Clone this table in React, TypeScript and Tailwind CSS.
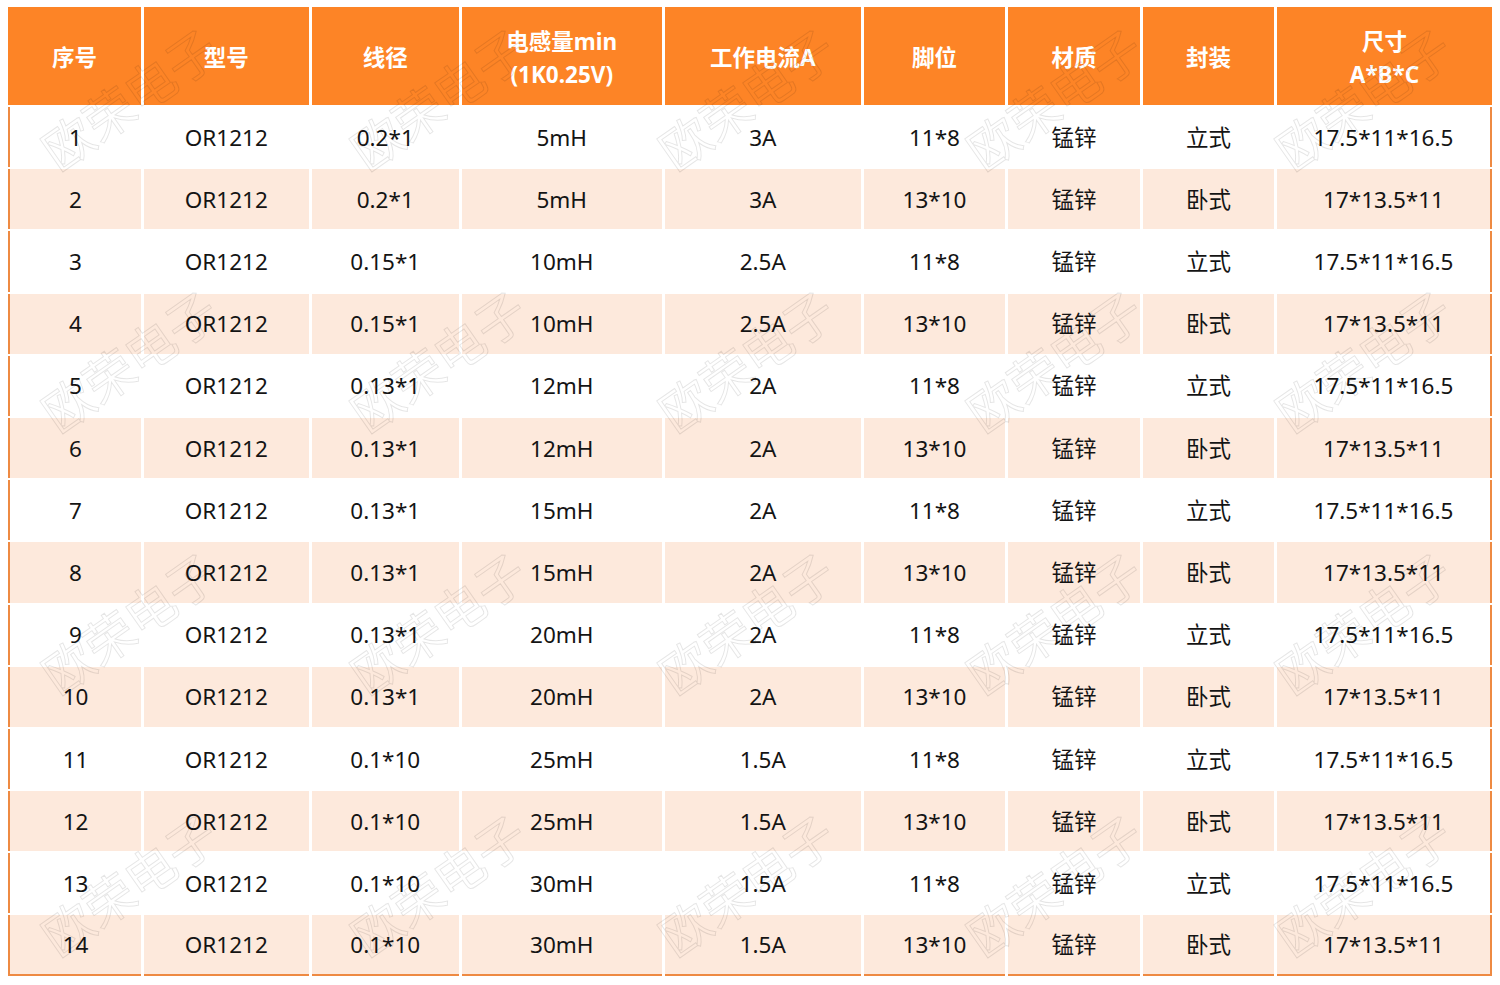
import React from "react";

const headers: React.ReactNode[] = [
  "序号",
  "型号",
  "线径",
  <>
    电感量min
    <br />
    (1K0.25V)
  </>,
  "工作电流A",
  "脚位",
  "材质",
  "封装",
  <>
    尺寸
    <br />
    A*B*C
  </>,
];

const spec: [string, string, string][] = [
  ["0.2*1", "5mH", "3A"],
  ["0.15*1", "10mH", "2.5A"],
  ["0.13*1", "12mH", "2A"],
  ["0.13*1", "15mH", "2A"],
  ["0.13*1", "20mH", "2A"],
  ["0.1*10", "25mH", "1.5A"],
  ["0.1*10", "30mH", "1.5A"],
];

const rows: string[][] = [];
spec.forEach(([d, l, a], i) => {
  rows.push([String(i * 2 + 1), "OR1212", d, l, a, "11*8", "锰锌", "立式", "17.5*11*16.5"]);
  rows.push([String(i * 2 + 2), "OR1212", d, l, a, "13*10", "锰锌", "卧式", "17*13.5*11"]);
});

export default function App() {
  return (
    <div className="relative w-[1500px] h-[985px] overflow-hidden bg-white font-['Noto_Sans','Noto_Sans_CJK_SC',sans-serif]">
      <div className="pl-[8px] pt-[7px]">
        <div className="grid w-[1484px] grid-cols-[133px_164.5px_147.5px_199.5px_196.5px_141px_132px_131px_215px] gap-x-[3px] gap-y-[2px]">
          {headers.map((h, i) => (
            <div
              key={i}
              className="h-[98px] bg-[#fd8426] flex items-center justify-center text-center text-white font-bold text-[22.5px] leading-[33px] pt-[3px]"
            >
              <div>{h}</div>
            </div>
          ))}
          {rows.map((r, ri) =>
            r.map((c, ci) => {
              const pink = ri % 2 === 1;
              const last = ri === rows.length - 1;
              return (
                <div
                  key={ri + "-" + ci}
                  className={
                    "h-[60.2px] flex items-center justify-center text-[22.5px] text-[#141414] pt-[1px] " +
                    (pink ? "bg-[#fde9dc] " : "bg-white ") +
                    (ci === 0 ? "border-l-2 border-l-[#ee8a42] " : "") +
                    (ci === 8 ? "border-r-2 border-r-[#ee8a42] " : "") +
                    (last ? "border-b-2 border-b-[#ee8a42] " : "")
                  }
                >
                  {c}
                </div>
              );
            })
          )}
        </div>
      </div>
      <div className="pointer-events-none absolute left-[-26px] top-[-34px] w-[1542px] h-[1048px] grid grid-cols-5 grid-rows-4">
        {Array.from({ length: 20 }).map((_, i) => (
          <div key={i} className="flex items-center justify-center">
            <span className="-rotate-[35deg] text-[50px] leading-none text-transparent [-webkit-text-stroke:1px_rgba(0,0,0,0.1)] font-['Noto_Sans_CJK_SC',sans-serif] whitespace-nowrap">
              欧荣电子
            </span>
          </div>
        ))}
      </div>
    </div>
  );
}
